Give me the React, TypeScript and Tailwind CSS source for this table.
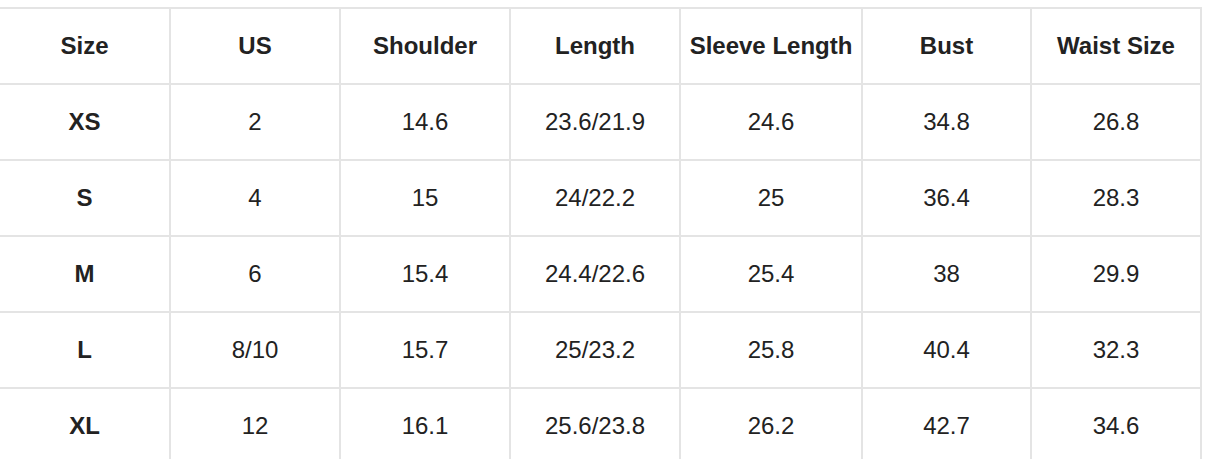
import React from "react";

type Row = string[];

const headers = ["Size", "US", "Shoulder", "Length", "Sleeve Length", "Bust", "Waist Size"];

const rows: Row[] = [
  ["XS", "2", "14.6", "23.6/21.9", "24.6", "34.8", "26.8"],
  ["S", "4", "15", "24/22.2", "25", "36.4", "28.3"],
  ["M", "6", "15.4", "24.4/22.6", "25.4", "38", "29.9"],
  ["L", "8/10", "15.7", "25/23.2", "25.8", "40.4", "32.3"],
  ["XL", "12", "16.1", "25.6/23.8", "26.2", "42.7", "34.6"],
];

export default function App() {
  return (
    <div className="h-[459px] w-[1206px] overflow-hidden bg-white pt-[7px] font-['Liberation_Sans',Arial,sans-serif] text-[24px] text-[#222]">
      <div className="grid w-fit grid-cols-[169px_168px_168px_168px_180px_167px_168px] auto-rows-[74px] gap-[2px] bg-[#e4e4e4] pr-[2px] pt-[2px]">
        {headers.map((h) => (
          <div key={h} className="flex items-center justify-center bg-white font-bold">
            {h}
          </div>
        ))}
        {rows.map((row) =>
          row.map((cell, i) => (
            <div
              key={row[0] + i}
              className={i === 0 ? "flex items-center justify-center bg-white font-bold" : "flex items-center justify-center bg-white"}
            >
              {cell}
            </div>
          ))
        )}
      </div>
    </div>
  );
}
